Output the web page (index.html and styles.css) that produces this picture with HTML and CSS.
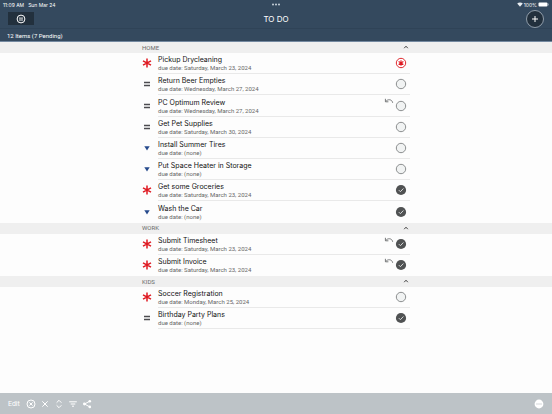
FILE: index.html
```
<!DOCTYPE html>
<html lang="en">
<head>
<meta charset="utf-8">
<meta name="viewport" content="width=device-width, initial-scale=1">
<title>To Do</title>
<link rel="stylesheet" href="styles.css">
</head>
<body>
<svg class="sprite" aria-hidden="true">
  <symbol id="high" viewBox="0 0 10 10"><path d="M5 .5v9M1 2.8l8 4.4M9 2.8L1 7.2" fill="none" stroke="#df1a22" stroke-width="1.5"/></symbol>
  <symbol id="normal" viewBox="0 0 10 10"><path d="M2 3.5h6M2 6.5h6" fill="none" stroke="#4c4c50" stroke-width="1.4"/></symbol>
  <symbol id="low" viewBox="0 0 10 10"><path d="M2.3 3.2h5.4L5 7.6z" fill="#264a8c"/></symbol>
  <symbol id="open" viewBox="0 0 12 12"><circle cx="6" cy="6" r="4.7" fill="#f1f3f3" stroke="#8c8f90"/></symbol>
  <symbol id="done" viewBox="0 0 12 12"><circle cx="6" cy="6" r="5.1" fill="#505253"/><path d="M3.8 6.1l1.6 1.6 3-3.2" fill="none" stroke="#e4e6e6" stroke-width=".9"/></symbol>
  <symbol id="urgent" viewBox="0 0 12 12"><circle cx="6" cy="6" r="4.7" fill="#fff" stroke="#df2a30"/><path d="M6 3.3v5.4M3.6 4.6l4.8 2.8M8.4 4.6L3.6 7.4" fill="none" stroke="#df1a22" stroke-width="1.1"/></symbol>
  <symbol id="undo" viewBox="0 0 10 6"><path d="M1.4.8v3h3M1.6 3.6C3.6.9 8 1 8.7 4.8" fill="none" stroke="#77797a" stroke-width="1"/></symbol>
  <symbol id="caret" viewBox="0 0 6 6"><path d="M1.2 4.2L3 2.2l1.8 2" fill="none" stroke="#444" stroke-width="1"/></symbol>
</svg>

<header class="top">
  <div class="status">
    <span>11:09 AM</span><span>Sun Mar 24</span>
    <svg class="dots" viewBox="0 0 10 3" aria-hidden="true"><g fill="#c9d2db"><circle cx="2" cy="1.5" r="1"/><circle cx="5" cy="1.5" r="1"/><circle cx="8" cy="1.5" r="1"/></g></svg>
    <svg class="wifi" viewBox="0 0 6 5" aria-hidden="true"><path d="M.2 1.6C1.8.1 4.2.1 5.8 1.6L3 4.7z" fill="#e8edf1"/></svg>
    <span class="percent">100%</span>
    <svg class="battery" viewBox="0 0 11 5" aria-hidden="true"><rect x=".5" y=".5" width="9" height="4" rx="1" fill="#fff"/><path d="M10.3 1.6v1.8" stroke="#b8c3cd" stroke-width=".7"/></svg>
  </div>
  <div class="bar">
    <button class="menu" aria-label="Menu"><svg viewBox="0 0 10 10"><circle cx="5" cy="5" r="3.9" fill="none" stroke="#fff" stroke-width="1"/><path d="M3 4.1h4M3 6h4" stroke="#fff" stroke-width=".9"/></svg></button>
    <h1>TO DO</h1>
    <button class="add" aria-label="Add item"><svg viewBox="0 0 18 18"><circle cx="9" cy="9" r="8.5" fill="#22303d" stroke="#a9b5c0" stroke-width=".8"/><path d="M9 6v6M6 9h6" stroke="#fff" stroke-width="1"/></svg></button>
  </div>
  <p class="summary">12 Items (7 Pending)</p>
</header>

<main class="list">
  <h2><button>HOME<svg><use href="#caret"/></svg></button></h2>
  <article><svg class="mark"><use href="#high"/></svg><div class="item"><div class="text"><h3>Pickup Drycleaning</h3><p>due date: Saturday, March 23, 2024</p></div><button class="check" aria-label="Complete"><svg><use href="#urgent"/></svg></button></div></article>
  <article><svg class="mark"><use href="#normal"/></svg><div class="item"><div class="text"><h3>Return Beer Empties</h3><p>due date: Wednesday, March 27, 2024</p></div><button class="check" aria-label="Complete"><svg><use href="#open"/></svg></button></div></article>
  <article><svg class="mark"><use href="#normal"/></svg><div class="item"><div class="text"><h3>PC Optimum Review</h3><p>due date: Wednesday, March 27, 2024</p></div><svg class="undo"><use href="#undo"/></svg><button class="check" aria-label="Complete"><svg><use href="#open"/></svg></button></div></article>
  <article><svg class="mark"><use href="#normal"/></svg><div class="item"><div class="text"><h3>Get Pet Supplies</h3><p>due date: Saturday, March 30, 2024</p></div><button class="check" aria-label="Complete"><svg><use href="#open"/></svg></button></div></article>
  <article><svg class="mark"><use href="#low"/></svg><div class="item"><div class="text"><h3>Install Summer Tires</h3><p>due date: (none)</p></div><button class="check" aria-label="Complete"><svg><use href="#open"/></svg></button></div></article>
  <article><svg class="mark"><use href="#low"/></svg><div class="item"><div class="text"><h3>Put Space Heater in Storage</h3><p>due date: (none)</p></div><button class="check" aria-label="Complete"><svg><use href="#open"/></svg></button></div></article>
  <article><svg class="mark"><use href="#high"/></svg><div class="item"><div class="text"><h3>Get some Groceries</h3><p>due date: Saturday, March 23, 2024</p></div><button class="check" aria-label="Completed"><svg><use href="#done"/></svg></button></div></article>
  <article class="last"><svg class="mark"><use href="#low"/></svg><div class="item"><div class="text"><h3>Wash the Car</h3><p>due date: (none)</p></div><button class="check" aria-label="Completed"><svg><use href="#done"/></svg></button></div></article>

  <h2><button>WORK<svg><use href="#caret"/></svg></button></h2>
  <article><svg class="mark"><use href="#high"/></svg><div class="item"><div class="text"><h3>Submit Timesheet</h3><p>due date: Saturday, March 23, 2024</p></div><svg class="undo"><use href="#undo"/></svg><button class="check" aria-label="Completed"><svg><use href="#done"/></svg></button></div></article>
  <article class="last"><svg class="mark"><use href="#high"/></svg><div class="item"><div class="text"><h3>Submit Invoice</h3><p>due date: Saturday, March 23, 2024</p></div><svg class="undo"><use href="#undo"/></svg><button class="check" aria-label="Completed"><svg><use href="#done"/></svg></button></div></article>

  <h2><button>KIDS<svg><use href="#caret"/></svg></button></h2>
  <article><svg class="mark"><use href="#high"/></svg><div class="item"><div class="text"><h3>Soccer Registration</h3><p>due date: Monday, March 25, 2024</p></div><button class="check" aria-label="Complete"><svg><use href="#open"/></svg></button></div></article>
  <article><svg class="mark"><use href="#normal"/></svg><div class="item"><div class="text"><h3>Birthday Party Plans</h3><p>due date: (none)</p></div><button class="check" aria-label="Completed"><svg><use href="#done"/></svg></button></div></article>
</main>

<footer class="tools">
  <button class="edit">Edit</button>
  <button aria-label="Clear completed"><svg viewBox="0 0 10 10"><circle cx="5" cy="5" r="4"/><path d="M3.4 3.4l3.2 3.2M6.6 3.4L3.4 6.6"/></svg></button>
  <button aria-label="Delete"><svg viewBox="0 0 10 10"><path d="M2.3 2.3l5.4 5.4M7.7 2.3L2.3 7.7"/></svg></button>
  <button aria-label="Expand"><svg viewBox="0 0 10 10"><path d="M2.6 3.7L5 1.3l2.4 2.4M2.6 6.3L5 8.7l2.4-2.4"/></svg></button>
  <button aria-label="Filter"><svg viewBox="0 0 10 10"><path d="M1.2 2.8h7.6M2.7 5h4.6M4 7.2h2"/></svg></button>
  <button aria-label="Share"><svg viewBox="0 0 10 10"><path d="M7.8 2.2L2.5 5l5.3 2.9"/><g fill="#fff" stroke="none"><circle cx="7.8" cy="2.2" r="1.3"/><circle cx="2.4" cy="5" r="1.4"/><circle cx="7.8" cy="7.9" r="1.3"/></g></svg></button>
  <button class="more" aria-label="More"><svg viewBox="0 0 10 10"><circle cx="5" cy="5" r="4.4" fill="#fff" stroke="none"/><path d="M2.5 5h1M4.5 5h1M6.5 5h1" stroke="#aab1b6"/></svg></button>
</footer>
</body>
</html>
```
FILE: styles.css
```
* { box-sizing: border-box; margin: 0; padding: 0; }

body {
  display: flex;
  flex-direction: column;
  min-height: 100vh;
  background: #fdfdfd;
  color: #111;
  font-family: Roboto, "Liberation Sans", sans-serif;
  font-size: 6px;
}

button {
  border: 0;
  background: none;
  color: inherit;
  font: inherit;
}

svg { display: block; }

.sprite { position: absolute; width: 0; height: 0; }

/* Header */
.top {
  background: #34495e;
  color: #fff;
  border-bottom: 1px solid #7489a0;
}

.status {
  position: relative;
  display: flex;
  align-items: center;
  height: 9px;
  padding: 0 3px;
  font-family: Inter, "Liberation Sans", sans-serif;
  font-size: 5px;
}

.status span + span { margin-left: 4px; }

.dots { position: absolute; left: 50%; width: 10px; height: 3px; margin-left: -5px; }
.wifi { width: 6px; height: 5px; margin-left: auto; }
.status .percent { margin: 0 1px; }
.battery { width: 11px; height: 5px; }

.bar {
  display: grid;
  grid-template-columns: 1fr auto 1fr;
  align-items: center;
  height: 19px;
  padding: 0 8px;
}

.bar h1 {
  font-family: Inter, "Liberation Sans", sans-serif;
  font-size: 8px;
  font-weight: 400;
  line-height: 12px;
}

.menu {
  display: grid;
  place-items: center;
  width: 26px;
  height: 13px;
  background: #22303d;
}

.menu svg { width: 10px; height: 10px; }
.add { justify-self: end; }
.add svg { width: 18px; height: 18px; }

.summary {
  padding: 2px 7px 1px;
  border-top: 1px solid #2f4357;
  line-height: 9px;
}

/* List: item rows share the free height, with room for three more below */
.list {
  display: flex;
  flex: 1;
  flex-direction: column;
}

.list::after { content: ""; flex: 3 1 0; }

.list h2,
.list article {
  padding: 0 calc(50% - 134px);
}

.list h2 {
  flex: none;
  background: #efefef;
  color: #6a6a6a;
  font-size: 6px;
  font-weight: 400;
}

.list h2 button {
  display: flex;
  align-items: center;
  justify-content: space-between;
  width: 100%;
  height: 11px;
  padding: 0 1px 1px 0;
}

.list h2 svg { width: 6px; height: 6px; }

.list article {
  display: flex;
  flex: 1 0 0;
  align-items: stretch;
  min-height: 21px;
}

.mark { align-self: center; width: 10px; height: 10px; margin: 0 6px 1px 0; }

.item {
  display: flex;
  flex: 1;
  align-items: center;
  padding-right: 3px;
  border-bottom: 1px solid #e9e9e9;
}

.last .item { border-color: transparent; }

.text { flex: 1; }

.text h3 {
  font-family: Inter, "Liberation Sans", sans-serif;
  font-size: 7px;
  font-weight: 400;
  line-height: 9px;
}

.text p { color: #666; line-height: 7px; }

.check svg { width: 12px; height: 12px; }
.undo { align-self: flex-start; width: 10px; height: 6px; margin: 3px 1px 0 0; }

/* Toolbar */
.tools {
  display: flex;
  align-items: center;
  gap: 4px;
  height: 21px;
  padding: 0 8px;
  background: #bdc3c7;
  color: #fff;
}

.tools svg { width: 10px; height: 10px; fill: none; stroke: #fff; stroke-width: 1; }
.edit { margin-right: 2px; font-size: 7px; }
.more { margin-left: auto; }
```
